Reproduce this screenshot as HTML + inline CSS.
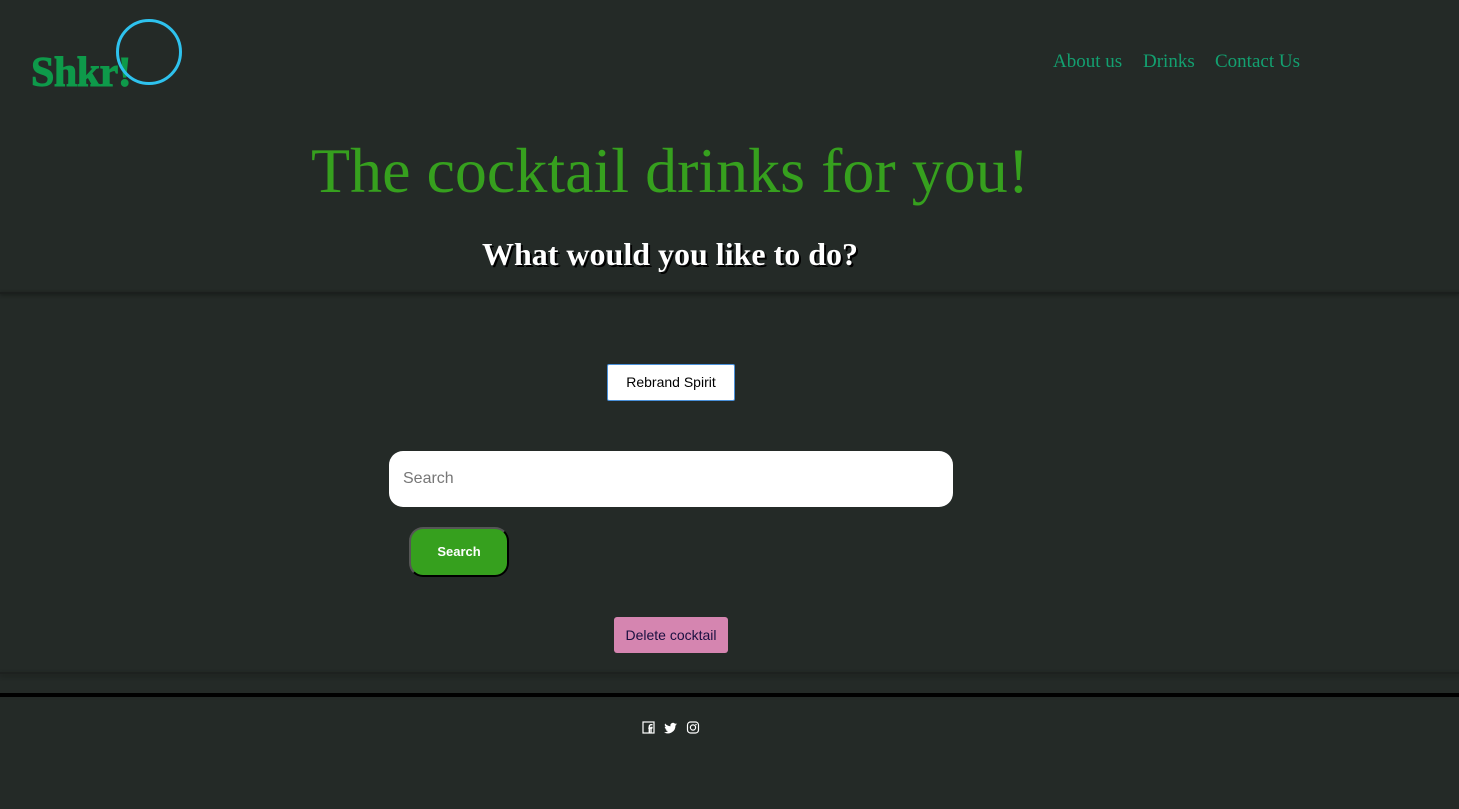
<!DOCTYPE html>
<html><head><style>
body{margin:0;width:1459px;height:809px;background:#242a27;position:relative;overflow:hidden;font-family:"Liberation Sans",sans-serif}
.abs{position:absolute}
.logo{left:31px;top:49px;font-family:"Liberation Serif",serif;font-weight:bold;font-size:42px;color:#0e9a4a;letter-spacing:-0.5px;-webkit-text-stroke:1px #0e9a4a}
.circ{left:116px;top:19px;width:60px;height:60px;border:3px solid #2ec2ee;border-radius:50%}
.nav{top:51px;font-family:"Liberation Serif",serif;font-size:19px;color:#13a070}
h1{position:absolute;margin:0;left:0;width:1340px;text-align:center;top:134px;font-family:"Liberation Serif",serif;font-weight:normal;font-size:64px;color:#36a01e}
h2{position:absolute;margin:0;left:0;width:1340px;text-align:center;top:236px;font-family:"Liberation Serif",serif;font-weight:bold;font-size:32px;color:#fff;text-shadow:2px 2px 0 #000}
.line1{left:0;top:292px;width:1459px;height:2px;background:#1b1f1d;box-shadow:0 1px 3px #161917}
.line2{left:0;top:672px;width:1459px;height:2px;background:#1d211f;box-shadow:0 2px 4px #1a1e1c}
.line3{left:0;top:693px;width:1459px;height:4px;background:#000}
.reb{left:607px;top:364px;width:126px;height:35px;background:#fff;border:1px solid #4a90d9;border-radius:2px;font-size:14px;color:#000;text-align:center;line-height:35px}
.inp{left:389px;top:451px;width:564px;height:56px;background:#fff;border-radius:14px;font-size:16px;color:#777;line-height:56px;text-indent:14px}
.sb{left:409px;top:527px;width:96px;height:46px;background:#36a01e;border-radius:14px;border:2px solid #555;border-right-color:#000;border-bottom-color:#000;color:#fff;font-weight:bold;font-size:13px;text-align:center;line-height:46px}
.del{left:614px;top:617px;width:114px;height:36px;background:#d585b0;border-radius:3px;font-size:14px;color:#1a1040;text-align:center;line-height:36px}
</style></head><body>
<div class="abs logo">Shkr!</div>
<div class="abs circ"></div>
<div class="abs nav" style="left:1053px">About us</div>
<div class="abs nav" style="left:1143px">Drinks</div>
<div class="abs nav" style="left:1215px">Contact Us</div>
<h1>The cocktail drinks for you!</h1>
<h2>What would you like to do?</h2>
<div class="abs line1"></div>
<div class="abs reb">Rebrand Spirit</div>
<div class="abs inp">Search</div>
<div class="abs sb">Search</div>
<div class="abs del">Delete cocktail</div>
<div class="abs line2"></div>
<div class="abs line3"></div>
<svg class="abs" style="left:642px;top:721px" width="60" height="14" viewBox="0 0 60 14">
<rect x="1" y="1" width="11" height="11" fill="none" stroke="#fff" stroke-width="1.2"/>
<path d="M9 12V6.5h1.6M7.3 12V5.5a1.8 1.8 0 0 1 1.8-1.8h1.4M6.3 7.2h4" stroke="#fff" stroke-width="1.4" fill="none"/>
<path d="M35 3.2c-.5.2-1 .4-1.5.4.5-.3 1-.8 1.2-1.4-.5.3-1.1.5-1.7.6a2.6 2.6 0 0 0-4.5 2.4c-2.2-.1-4.100-1.100-5.400-2.700-.7 1.200-.3 2.700.8 3.500-.4 0-.8-.1-1.200-.3 0 1.300.9 2.400 2.100 2.600-.4.1-.8.1-1.200 0 .3 1.100 1.300 1.800 2.400 1.800A5.300 5.300 0 0 1 22 11.200 7.400 7.400 0 0 0 33.400 4.600c.6-.4 1.100-.9 1.600-1.400z" fill="#fff"/>
<rect x="45.5" y="1" width="11" height="11" rx="3" fill="none" stroke="#fff" stroke-width="1.2"/>
<circle cx="51" cy="6.5" r="2.6" fill="none" stroke="#fff" stroke-width="1.2"/>
<circle cx="54" cy="3.6" r=".7" fill="#fff"/>
</svg>
</body></html>
